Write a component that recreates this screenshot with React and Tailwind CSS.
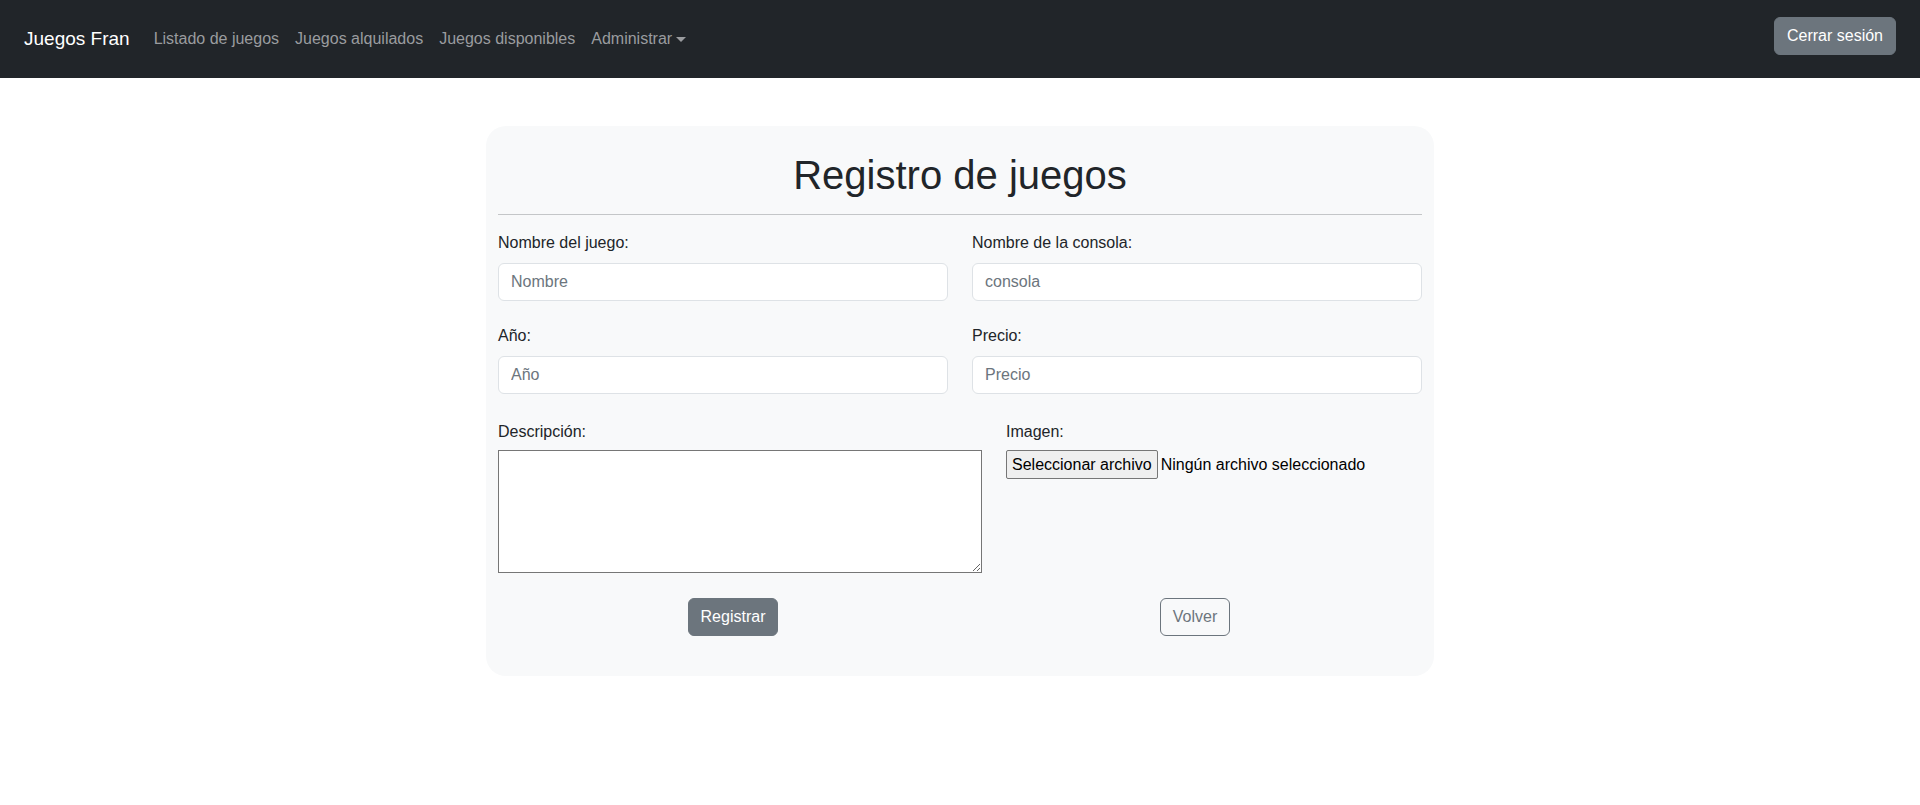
const NAV_LINKS = ['Listado de juegos', 'Juegos alquilados', 'Juegos disponibles'];

function Navbar() {
  return (
    <nav className="flex h-[78px] items-center bg-[#212529] px-6">
      <a className="mr-4 text-[19px] leading-[30px] text-white">Juegos Fran</a>
      <ul className="flex items-center">
        {NAV_LINKS.map((link) => (
          <li key={link}>
            <a className="block px-2 py-2 text-base leading-6 text-[#9a9c9f]">{link}</a>
          </li>
        ))}
        <li>
          <a className="flex items-center px-2 py-2 text-base leading-6 text-[#9a9c9f]">
            Administrar
            <span className="ml-[4px] mt-[1px] h-0 w-0 border-x-[5px] border-t-[5px] border-x-transparent border-t-[#9a9c9f]" />
          </a>
        </li>
      </ul>
      <button className="ml-auto mb-[6px] self-center rounded-md border border-[#6c757d] bg-[#6c757d] px-3 py-[6px] text-base leading-6 text-white">
        Cerrar sesión
      </button>
    </nav>
  );
}

function Field({ label, placeholder }) {
  return (
    <div className="flex flex-col">
      <label className="mb-2 text-base leading-6 text-[#212529]">{label}</label>
      <input
        type="text"
        placeholder={placeholder}
        className="h-[38px] w-full rounded-md border border-[#dee2e6] bg-white px-3 text-base text-[#212529] outline-none placeholder:text-[#6c757d]"
      />
    </div>
  );
}

export default function App() {
  return (
    <div className="min-h-screen bg-white font-['Liberation_Sans',Arial,sans-serif] text-[#212529]">
      <Navbar />
      <main className="mx-auto mt-12 w-[948px] rounded-[20px] bg-[#f8f9fa] px-3 pt-[25px] pb-10">
        <h1 className="text-center text-[40px] leading-[48px] font-medium text-[#212529]">Registro de juegos</h1>
        <hr className="mt-[15px] h-px border-0 bg-[#c4c6c8]" />

        <div className="mt-4 grid grid-cols-2 gap-x-6">
          <Field label="Nombre del juego:" placeholder="Nombre" />
          <Field label="Nombre de la consola:" placeholder="consola" />
        </div>

        <div className="mt-[23px] grid grid-cols-2 gap-x-6">
          <Field label="Año:" placeholder="Año" />
          <Field label="Precio:" placeholder="Precio" />
        </div>

        <div className="mt-[26px] grid grid-cols-[484px_1fr] gap-x-6">
          <div className="flex flex-col">
            <label className="mb-[6px] text-base leading-6">Descripción:</label>
            <textarea className="h-[123px] w-[484px] border border-[#767676] bg-white outline-none" />
          </div>
          <div className="flex flex-col">
            <label className="mb-[6px] text-base leading-6">Imagen:</label>
            <div className="flex items-center">
              <span className="flex h-[29px] items-center rounded-[2px] border border-[#767676] bg-[#efefef] px-[5px] text-base text-black">
                Seleccionar archivo
              </span>
              <span className="ml-[3px] text-base text-black">Ningún archivo seleccionado</span>
            </div>
          </div>
        </div>

        <div className="mt-[25px] flex">
          <div className="flex w-[470px] justify-center">
            <button className="rounded-md border border-[#6c757d] bg-[#6c757d] px-3 py-[6px] text-base leading-6 text-white">
              Registrar
            </button>
          </div>
          <div className="flex flex-1 justify-center">
            <button className="rounded-md border border-[#6c757d] bg-transparent px-3 py-[6px] text-base leading-6 text-[#6c757d]">
              Volver
            </button>
          </div>
        </div>
      </main>
    </div>
  );
}
